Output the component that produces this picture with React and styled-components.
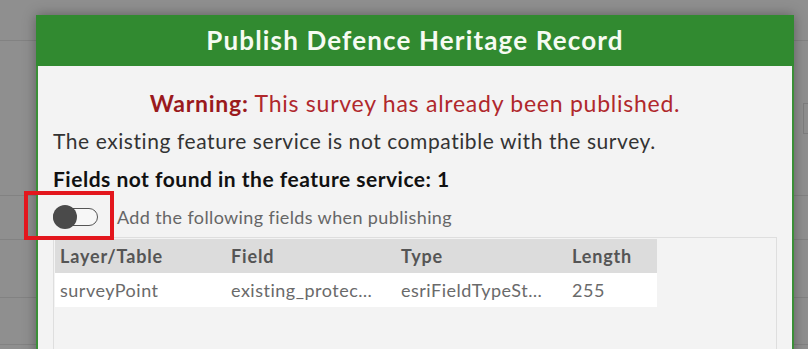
import React from "react";
import styled, { createGlobalStyle } from "styled-components";

const GlobalStyle = createGlobalStyle`
  html, body { margin: 0; padding: 0; }
  body {
    background: #8e8e8e;
    overflow: hidden;
    font-family: "Lato", "Open Sans", sans-serif;
  }
`;

const Page = styled.div`
  position: relative;
  width: 808px;
  height: 349px;
  overflow: hidden;
  background: #8f8f8f;
`;

const Backdrop = styled.div`
  display: flex;
  flex-direction: column;
  height: 100%;
`;

const BgRow = styled.div`
  height: ${(p) => p.$h}px;
  border-bottom: 1px solid #828282;
  display: flex;
  justify-content: flex-end;
  align-items: ${(p) => (p.$boxed ? "flex-start" : "stretch")};
  box-sizing: border-box;
`;

const BgField = styled.div`
  margin-top: 62px;
  width: 4px;
  height: 29px;
  border: 1px solid #7e7e7e;
  border-right: none;
`;

const Dialog = styled.div`
  position: absolute;
  left: 36px;
  top: 15px;
  width: 758px;
  bottom: -20px;
  display: flex;
  flex-direction: column;
  box-shadow: 0 0 12px rgba(0, 0, 0, 0.35);
`;

const Header = styled.div`
  height: 51px;
  padding-bottom: 2px;
  box-sizing: border-box;
  background: #318a30;
  color: #f6fbf2;
  display: flex;
  align-items: center;
  justify-content: center;
  font-size: 26px;
  font-weight: 700;
  letter-spacing: 1.15px;
`;

const Body = styled.div`
  flex: 1;
  background: #f3f3f3;
  border-left: 2px solid #3a8f37;
  border-right: 2px solid #3a8f37;
  padding: 18px 15px 0 15px;
  display: flex;
  flex-direction: column;
`;

const Warning = styled.div`
  height: 38px;
  line-height: 38px;
  text-align: center;
  font-size: 23px;
  letter-spacing: 0.75px;
  color: #b0282c;
  white-space: nowrap;
`;

const WarnLabel = styled.span`
  font-weight: 700;
  color: #9a1a1d;
`;

const Line = styled.div`
  height: ${(p) => p.$h}px;
  line-height: ${(p) => p.$h}px;
  font-size: ${(p) => p.$size}px;
  letter-spacing: ${(p) => p.$ls}px;
  font-weight: ${(p) => (p.$bold ? 700 : 400)};
  color: ${(p) => p.$color};
  white-space: nowrap;
`;

const ToggleRow = styled.div`
  height: 37px;
  display: flex;
  align-items: center;
  gap: 19px;
`;

const ToggleWrap = styled.div`
  position: relative;
  width: 45px;
  height: 24px;
  display: flex;
  align-items: center;
`;

const Track = styled.div`
  width: 45px;
  height: 18px;
  box-sizing: border-box;
  border: 1.5px solid #555;
  border-radius: 9px;
  background: #f7f7f7;
`;

const Knob = styled.div`
  position: absolute;
  left: 0;
  top: 0;
  width: 24px;
  height: 24px;
  border-radius: 50%;
  background: #4a4a4a;
`;

const Highlight = styled.div`
  position: absolute;
  left: -29px;
  top: -14px;
  width: 90px;
  height: 49px;
  box-sizing: border-box;
  border: 4px solid #e3161d;
`;

const ToggleLabel = styled.span`
  font-size: 18px;
  letter-spacing: 0.38px;
  color: #666;
  white-space: nowrap;
`;

const TableBox = styled.div`
  margin-top: 2px;
  flex: 1;
  border: 1px solid #dedede;
  padding: 1px;
`;

const Table = styled.div`
  width: 602px;
  display: grid;
  grid-template-columns: 171px 170px 171px 90px;
`;

const Cell = styled.div`
  height: 34px;
  line-height: 34px;
  padding: 0 20px 0 5px;
  font-size: 18px;
  letter-spacing: ${(p) => (p.$head ? 0.85 : 0.5)}px;
  white-space: nowrap;
  overflow: hidden;
  text-overflow: ellipsis;
  background: ${(p) => (p.$head ? "#dcdcdc" : "#ffffff")};
  color: ${(p) => (p.$head ? "#555" : "#6a6a6a")};
  font-weight: ${(p) => (p.$head ? 700 : 400)};
`;

const headers = ["Layer/Table", "Field", "Type", "Length"];
const row = ["surveyPoint", "existing_protection_status", "esriFieldTypeString", "255"];

export default function App() {
  return (
    <>
      <GlobalStyle />
      <Page>
        <Backdrop>
          <BgRow $h={41} />
          <BgRow $h={155} $boxed>
            <BgField />
          </BgRow>
          <BgRow $h={44} />
          <BgRow $h={58} />
          <BgRow $h={47} />
        </Backdrop>
        <Dialog>
          <Header>Publish Defence Heritage Record</Header>
          <Body>
            <Warning>
              <WarnLabel>Warning:</WarnLabel> This survey has already been published.
            </Warning>
            <Line $h={38} $size={21} $ls={0.57} $color="#333">
              The existing feature service is not compatible with the survey.
            </Line>
            <Line $h={38} $size={21} $ls={0.5} $color="#111" $bold>
              Fields not found in the feature service: 1
            </Line>
            <ToggleRow>
              <ToggleWrap>
                <Track />
                <Knob />
                <Highlight />
              </ToggleWrap>
              <ToggleLabel>Add the following fields when publishing</ToggleLabel>
            </ToggleRow>
            <TableBox>
              <Table>
                {headers.map((h) => (
                  <Cell key={h} $head>
                    {h}
                  </Cell>
                ))}
                {row.map((c) => (
                  <Cell key={c}>{c}</Cell>
                ))}
              </Table>
            </TableBox>
          </Body>
        </Dialog>
      </Page>
    </>
  );
}
